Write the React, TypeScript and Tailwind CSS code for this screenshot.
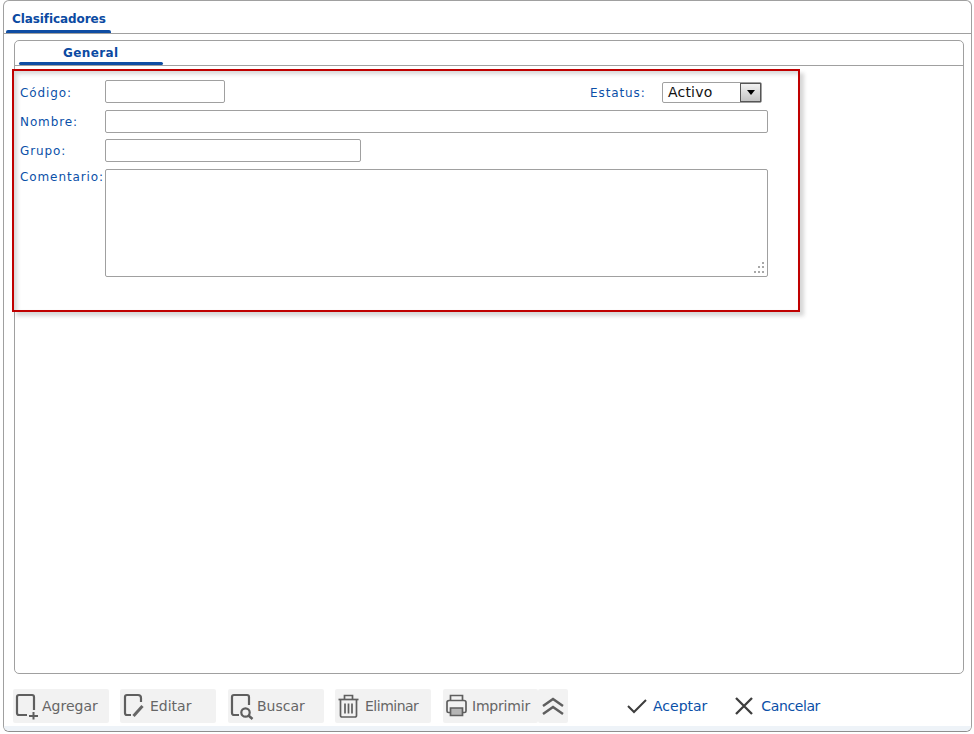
const labelClass = "text-[12px] leading-none tracking-[0.9px] text-[#0b50a8]";
const inputClass = "h-[23px] rounded-[2px] border border-[#a0a0a0] bg-white";
const toolClass = "flex h-[34px] items-center rounded-[2px] bg-[#f2f2f2] text-[14px] text-[#666666]";

function DocIcon({ children }: { children: React.ReactNode }) {
  return (
    <svg width="26" height="28" viewBox="0 0 26 28" fill="none" stroke="#5f5f5f" strokeWidth="2.200">
      {children}
    </svg>
  );
}

function ToolButton({ width, icon, label, gap }: { width: string; icon: React.ReactNode; label: string; gap: string }) {
  return (
    <div className={`${toolClass} ${width}`}>
      {icon}
      <span className={gap}>{label}</span>
    </div>
  );
}

export default function App() {
  return (
    <div className="h-[734px] w-[974px] bg-white pt-0 pl-[3px] font-['DejaVu_Sans',sans-serif]">
      <div className="flex h-[732px] w-[969px] flex-col overflow-hidden rounded-[6px] border border-[#a0a0a0] border-b-[#8f8f8f] bg-white">
        {/* main tab */}
        <div className="h-[33px] shrink-0 border-b border-[#a0a0a0] pl-[2px]">
          <div className="relative h-[32px] w-[105px] pt-[11px] pl-[6px] text-[12px] leading-[15px] font-bold tracking-[-0.08px] text-[#0b4aa2]">
            Clasificadores
            <div className="absolute right-0 bottom-0 left-0 h-[3px] rounded-t-[2px] bg-[#0f4da3]" />
          </div>
        </div>

        <div className="flex min-h-0 flex-1 flex-col px-[10px] pt-[6px]">
          {/* panel */}
          <div className="h-[634px] w-[950px] shrink-0 rounded-[5px] border border-[#a0a0a0]">
            <div className="h-[25px] border-b border-[#a0a0a0] pl-[4px]">
              <div className="relative h-[24px] w-[144px] pt-[5px] pl-[44px] text-[12px] leading-[15px] font-bold tracking-[0.4px] text-[#0b4aa2]">
                General
                <div className="absolute right-0 bottom-0 left-0 h-[3px] rounded-[2px] bg-[#0f4da3]" />
              </div>
            </div>

            {/* form */}
            <div className="mt-[3px] -ml-[3px] h-[243px] w-[788px] border-2 border-[#c00000] bg-white pt-[9px] pl-[6px] shadow-[4px_4px_4px_rgba(0,0,0,0.16),inset_3px_3px_4px_rgba(0,0,0,0.16)]">
              <div className="flex h-[23px] items-center">
                <span className={`${labelClass} w-[85px] pt-[2px]`}>Código:</span>
                <div className={`${inputClass} w-[120px]`} />
                <span className={`${labelClass} ml-[365px] w-[72px] pt-[2px]`}>Estatus:</span>
                <div className="mt-[1px] flex h-[21px] w-[100px] items-center justify-between rounded-[2px] border border-[#a0a0a0] pl-[5px] text-[14px] tracking-[0.2px] text-[#111111]">
                  <span className="pt-[1px]">Activo</span>
                  <div className="flex h-[19px] w-[21px] items-center justify-center border border-[#555555] bg-gradient-to-b from-[#f2f2f2] to-[#c4c4c4]">
                    <div className="h-0 w-0 border-x-[4px] border-t-[5px] border-x-transparent border-t-black" />
                  </div>
                </div>
              </div>
              <div className="mt-[7px] flex h-[23px] items-center">
                <span className={`${labelClass} w-[85px]`}>Nombre:</span>
                <div className={`${inputClass} w-[663px]`} />
              </div>
              <div className="mt-[6px] flex h-[23px] items-center">
                <span className={`${labelClass} w-[85px]`}>Grupo:</span>
                <div className={`${inputClass} w-[256px]`} />
              </div>
              <div className="mt-[7px] flex items-start">
                <span className={`${labelClass} w-[85px] pt-[2px] tracking-[0.8px]`}>Comentario:</span>
                <div className="relative h-[108px] w-[663px] rounded-[2px] border border-[#a0a0a0]">
                  <svg className="absolute right-[2px] bottom-[2px]" width="12" height="12" viewBox="0 0 12 12" fill="#a8a8a8">
                    <rect x="9" y="0" width="2" height="2" />
                    <rect x="5" y="4" width="2" height="2" />
                    <rect x="9" y="4" width="2" height="2" />
                    <rect x="1" y="9" width="2" height="2" />
                    <rect x="5" y="9" width="2" height="2" />
                    <rect x="9" y="9" width="2" height="2" />
                  </svg>
                </div>
              </div>
            </div>
          </div>

          {/* bottom toolbar */}
          <div className="mt-[15px] -ml-[1px] flex items-center">
            <ToolButton
              width="w-[96px] pl-[2px]"
              gap="ml-[1px]"
              label="Agregar"
              icon={
                <DocIcon>
                  <path d="M19 18V5A2 2 0 0 0 17 3H4A2 2 0 0 0 2 5V21A2 2 0 0 0 4 23H12" />
                  <path d="M14 24H23M18.500 20V27.500" strokeWidth="2" />
                </DocIcon>
              }
            />
            <ToolButton
              width="ml-[11px] w-[96px] pl-[2px]"
              gap="ml-[2px]"
              label="Editar"
              icon={
                <DocIcon>
                  <path d="M9 23H5A2 2 0 0 1 3 21V5A2 2 0 0 1 5 3H16A3 3 0 0 1 19 6V10" />
                  <path d="M11.500 24L20.500 14" strokeWidth="3" stroke="#666666" />
                </DocIcon>
              }
            />
            <ToolButton
              width="ml-[12px] w-[96px] pl-[2px]"
              gap="ml-[1px]"
              label="Buscar"
              icon={
                <DocIcon>
                  <path d="M9 23H4A2 2 0 0 1 2 21V5A2 2 0 0 1 4 3H17A2 2 0 0 1 19 5V13" />
                  <circle cx="15.500" cy="20.500" r="4.200" strokeWidth="2.200" />
                  <path d="M18.500 23.500L22.500 27" strokeWidth="2.500" />
                </DocIcon>
              }
            />
            <ToolButton
              width="ml-[11px] w-[96px] pl-[2px]"
              gap="ml-[2px] tracking-[-0.5px]"
              label="Eliminar"
              icon={
                <DocIcon>
                  <g strokeWidth="1.700">
                    <path d="M1.500 7.500H21.500" />
                    <path d="M7.500 7V3.500H15.500V7" />
                    <path d="M3.500 8V23.500A1.500 1.500 0 0 0 5 25H18A1.500 1.500 0 0 0 19.500 23.500V8" />
                    <path d="M8 11.500V21.500M11.500 11.500V21.500M15 11.500V21.500" />
                  </g>
                </DocIcon>
              }
            />
            <ToolButton
              width="ml-[12px] w-[95px] pl-[1px]"
              gap="ml-[2px] tracking-[-0.2px]"
              label="Imprimir"
              icon={
                <DocIcon>
                  <g strokeWidth="1.700">
                    <path d="M6.500 9V3.500H18.500V9" />
                    <path d="M6 20.500H4.500A1.500 1.500 0 0 1 3 19V10.500A2 2 0 0 1 5 8.500H20A2 2 0 0 1 22 10.500V19A1.500 1.500 0 0 1 20.500 20.500H19" />
                    <path d="M6.500 16H18.500V23.500H6.500Z" fill="#b5b5b5" />
                  </g>
                </DocIcon>
              }
            />
            <div className="flex h-[34px] w-[30px] items-center justify-center rounded-[2px] bg-[#f2f2f2]">
              <svg width="24" height="20" viewBox="0 0 24 20" fill="none" stroke="#5f5f5f" strokeWidth="2.500">
                <path d="M2 10L12 3L22 10" />
                <path d="M2 18L12 11L22 18" />
              </svg>
            </div>
            <svg className="ml-[58px]" width="22" height="18" viewBox="0 0 22 18" fill="none" stroke="#3d3d3d" strokeWidth="2">
              <path d="M2 9L8 15L20 3" />
            </svg>
            <span className="ml-[5px] text-[14px] text-[#0b50a8]">Aceptar</span>
            <svg className="ml-[27px]" width="20" height="20" viewBox="0 0 20 20" fill="none" stroke="#3d3d3d" strokeWidth="2.300">
              <path d="M2 2L18 18M18 2L2 18" />
            </svg>
            <span className="ml-[7px] text-[14px] tracking-[-0.4px] text-[#0b50a8]">Cancelar</span>
          </div>
        </div>
        <div className="h-[5px] shrink-0 bg-[#eef3f8]" />
      </div>
    </div>
  );
}
